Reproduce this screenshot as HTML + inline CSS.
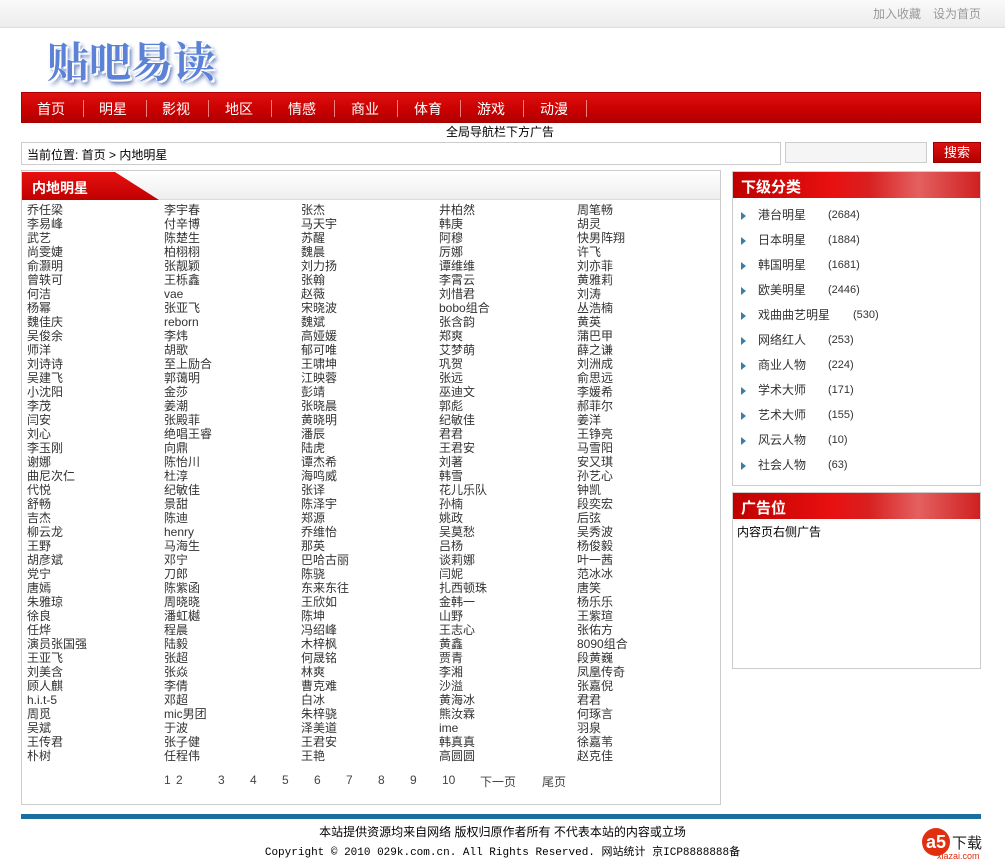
<!DOCTYPE html>
<html><head><meta charset="utf-8">
<style>
*{margin:0;padding:0;box-sizing:border-box}
body{width:1005px;height:865px;background:#fff;font-family:"Liberation Sans","Noto Sans CJK SC","WenQuanYi Zen Hei",sans-serif;font-size:12px;color:#222;position:relative;overflow:hidden}
.a{position:absolute;white-space:nowrap}
.top{left:0;top:0;width:1005px;height:28px;background:linear-gradient(#fafafa,#ececec);border-bottom:1px solid #ddd}
.top span{position:absolute;top:5px;color:#999;font-size:12px}
.logo{left:47px;top:30px;font-size:42px;font-weight:bold;color:#5b82d6;text-shadow:0 0 2px #fff,2px 2px 0 #fff,-1px -1px 0 #fff,3px 4px 5px #3a5aa8;font-family:"Noto Serif CJK SC","Noto Sans CJK SC",serif}
.nav{left:21px;top:92px;width:960px;height:31px;background:linear-gradient(#e01010,#c80000 60%,#b00000);border:1px solid #a00}
.nav span{position:absolute;top:6px;color:#fff;font-size:14px}
.nav i{position:absolute;top:7px;width:1px;height:17px;background:#f08080}
.box{border:1px solid #ccc;background:#fff}
.grid{left:27px;top:203px;width:690px}
.col{position:absolute;top:0;line-height:14px;font-size:12px;color:#333}
.hd{background:linear-gradient(90deg,#c00000,#e81010 40%,#d82020 55%,#e46060 75%,#d02020);color:#fff;font-weight:bold;font-size:15px;padding:4px 0 0 8px;height:26px}
.side li{list-style:none;height:25px;line-height:25px;padding-left:25px;position:relative;font-size:12px;color:#333}
.side li:before{content:"";position:absolute;left:8px;top:9px;border-left:5px solid #3a7ea8;border-top:4px solid transparent;border-bottom:4px solid transparent}
.side li b{font-weight:normal;position:absolute;left:95px;font-size:11px}
</style></head><body>
<div class="a top"><span style="left:873px">加入收藏</span><span style="left:933px">设为首页</span></div>
<div class="a logo">贴吧易读</div>
<div class="a nav">
<span style="left:15px">首页</span><i style="left:61px"></i>
<span style="left:77px">明星</span><i style="left:124px"></i>
<span style="left:140px">影视</span><i style="left:186px"></i>
<span style="left:203px">地区</span><i style="left:249px"></i>
<span style="left:266px">情感</span><i style="left:312px"></i>
<span style="left:329px">商业</span><i style="left:375px"></i>
<span style="left:392px">体育</span><i style="left:438px"></i>
<span style="left:455px">游戏</span><i style="left:501px"></i>
<span style="left:518px">动漫</span><i style="left:564px"></i>
</div>
<div class="a" style="left:446px;top:123px;font-size:12px;color:#000">全局导航栏下方广告</div>
<div class="a box" style="left:21px;top:142px;width:760px;height:23px;padding:3px 0 0 5px;color:#000">当前位置: 首页 &gt; 内地明星</div>
<div class="a" style="left:785px;top:142px;width:142px;height:21px;border:1px solid #ccc;background:#f5f5f5"></div>
<div class="a" style="left:933px;top:142px;width:48px;height:21px;background:linear-gradient(#e01010,#b00000);border:1px solid #900;color:#fff;font-size:13px;text-align:center;line-height:19px">搜索</div>

<div class="a box" style="left:21px;top:170px;width:700px;height:635px">
 <div style="height:29px;background:linear-gradient(#fff,#eee);border-bottom:1px solid #ddd;position:relative">
  <div style="position:absolute;left:0;top:1px;height:28px;width:137px;background:linear-gradient(#e81010,#c00000);clip-path:polygon(0 0,93px 0,137px 100%,0 100%);color:#fff;font-weight:bold;font-size:14px;padding:6px 0 0 10px">内地明星</div>
 </div>
</div>
<div class="a grid">
<div class="col" style="left:0">乔任梁<br>李易峰<br>武艺<br>尚雯婕<br>俞灏明<br>曾轶可<br>何洁<br>杨幂<br>魏佳庆<br>吴俊余<br>师洋<br>刘诗诗<br>吴建飞<br>小沈阳<br>李茂<br>闫安<br>刘心<br>李玉刚<br>谢娜<br>曲尼次仁<br>代悦<br>舒畅<br>吉杰<br>柳云龙<br>王野<br>胡彦斌<br>党宁<br>唐嫣<br>朱雅琼<br>徐良<br>任烨<br>演员张国强<br>王亚飞<br>刘美含<br>顾人麒<br>h.i.t-5<br>周觅<br>吴斌<br>王传君<br>朴树</div>
<div class="col" style="left:137px">李宇春<br>付辛博<br>陈楚生<br>柏栩栩<br>张靓颖<br>王栎鑫<br>vae<br>张亚飞<br>reborn<br>李炜<br>胡歌<br>至上励合<br>郭蔼明<br>金莎<br>姜潮<br>张殿菲<br>绝唱王睿<br>向鼎<br>陈怡川<br>杜淳<br>纪敏佳<br>景甜<br>陈迪<br>henry<br>马海生<br>邓宁<br>刀郎<br>陈紫函<br>周晓晓<br>潘虹樾<br>程晨<br>陆毅<br>张超<br>张焱<br>李倩<br>邓超<br>mic男团<br>于波<br>张子健<br>任程伟</div>
<div class="col" style="left:274px">张杰<br>马天宇<br>苏醒<br>魏晨<br>刘力扬<br>张翰<br>赵薇<br>宋晓波<br>魏斌<br>高娅媛<br>郁可唯<br>王啸坤<br>江映蓉<br>彭靖<br>张晓晨<br>黄晓明<br>潘辰<br>陆虎<br>谭杰希<br>海鸣威<br>张译<br>陈泽宇<br>郑源<br>乔维怡<br>那英<br>巴哈古丽<br>陈骁<br>东来东往<br>王欣如<br>陈坤<br>冯绍峰<br>木梓枫<br>何晟铭<br>林爽<br>曹克难<br>白冰<br>朱梓骁<br>泽美道<br>王君安<br>王艳</div>
<div class="col" style="left:412px">井柏然<br>韩庚<br>阿穆<br>厉娜<br>谭维维<br>李霄云<br>刘惜君<br>bobo组合<br>张含韵<br>郑爽<br>艾梦萌<br>巩贺<br>张远<br>巫迪文<br>郭彪<br>纪敏佳<br>君君<br>王君安<br>刘著<br>韩雪<br>花儿乐队<br>孙楠<br>姚政<br>吴莫愁<br>吕杨<br>谈莉娜<br>闫妮<br>扎西顿珠<br>金韩一<br>山野<br>王志心<br>黄鑫<br>贾青<br>李湘<br>沙溢<br>黄海冰<br>熊汝霖<br>ime<br>韩真真<br>高圆圆</div>
<div class="col" style="left:550px">周笔畅<br>胡灵<br>快男阵翔<br>许飞<br>刘亦菲<br>黄雅莉<br>刘涛<br>丛浩楠<br>黄英<br>蒲巴甲<br>薛之谦<br>刘洲成<br>俞思远<br>李媛希<br>郝菲尔<br>姜洋<br>王铮亮<br>马雪阳<br>安又琪<br>孙艺心<br>钟凯<br>段奕宏<br>后弦<br>吴秀波<br>杨俊毅<br>叶一茜<br>范冰冰<br>唐笑<br>杨乐乐<br>王紫瑄<br>张佑方<br>8090组合<br>段黄巍<br>凤凰传奇<br>张嘉倪<br>君君<br>何琢言<br>羽泉<br>徐嘉苇<br>赵克佳</div>
</div>
<div class="a" style="top:773px;left:164px;font-size:12px;color:#444">
<span class="a" style="left:0">1</span><span class="a" style="left:12px">2</span><span class="a" style="left:54px">3</span><span class="a" style="left:86px">4</span><span class="a" style="left:118px">5</span><span class="a" style="left:150px">6</span><span class="a" style="left:182px">7</span><span class="a" style="left:214px">8</span><span class="a" style="left:246px">9</span><span class="a" style="left:278px">10</span><span class="a" style="left:316px">下一页</span><span class="a" style="left:378px">尾页</span></div>

<div class="a box side" style="left:732px;top:171px;width:249px;height:315px">
 <div class="hd">下级分类</div>
 <ul style="padding-top:5px">
 <li>港台明星<b>(2684)</b></li><li>日本明星<b>(1884)</b></li><li>韩国明星<b>(1681)</b></li><li>欧美明星<b>(2446)</b></li><li>戏曲曲艺明星<b style="left:120px">(530)</b></li><li>网络红人<b>(253)</b></li><li>商业人物<b>(224)</b></li><li>学术大师<b>(171)</b></li><li>艺术大师<b>(155)</b></li><li>风云人物<b>(10)</b></li><li>社会人物<b>(63)</b></li>
 </ul>
</div>
<div class="a box" style="left:732px;top:492px;width:249px;height:177px">
 <div class="hd">广告位</div>
 <div style="padding:4px 4px;color:#000">内容页右侧广告</div>
</div>

<div class="a" style="left:21px;top:814px;width:960px;height:5px;background:#1a6fa0"></div>
<div class="a" style="left:0;top:823px;width:1005px;text-align:center;color:#000">本站提供资源均来自网络 版权归原作者所有 不代表本站的内容或立场</div>
<div class="a" style="left:0;top:843px;width:1005px;text-align:center;color:#000;font-family:'Liberation Mono','Noto Sans CJK SC',monospace;font-size:11px">Copyright © 2010 029k.com.cn. All Rights Reserved. 网站统计 京ICP8888888备</div>
<div class="a" style="left:922px;top:828px;width:28px;height:28px;border-radius:50%;background:#e03010;color:#fff;font-weight:bold;font-size:18px;text-align:center;line-height:28px">a5</div>
<div class="a" style="left:952px;top:832px;font-size:15px;color:#222">下载</div>
<div class="a" style="left:937px;top:851px;font-size:9px;color:#e03010">xiazai.com</div>
</body></html>
